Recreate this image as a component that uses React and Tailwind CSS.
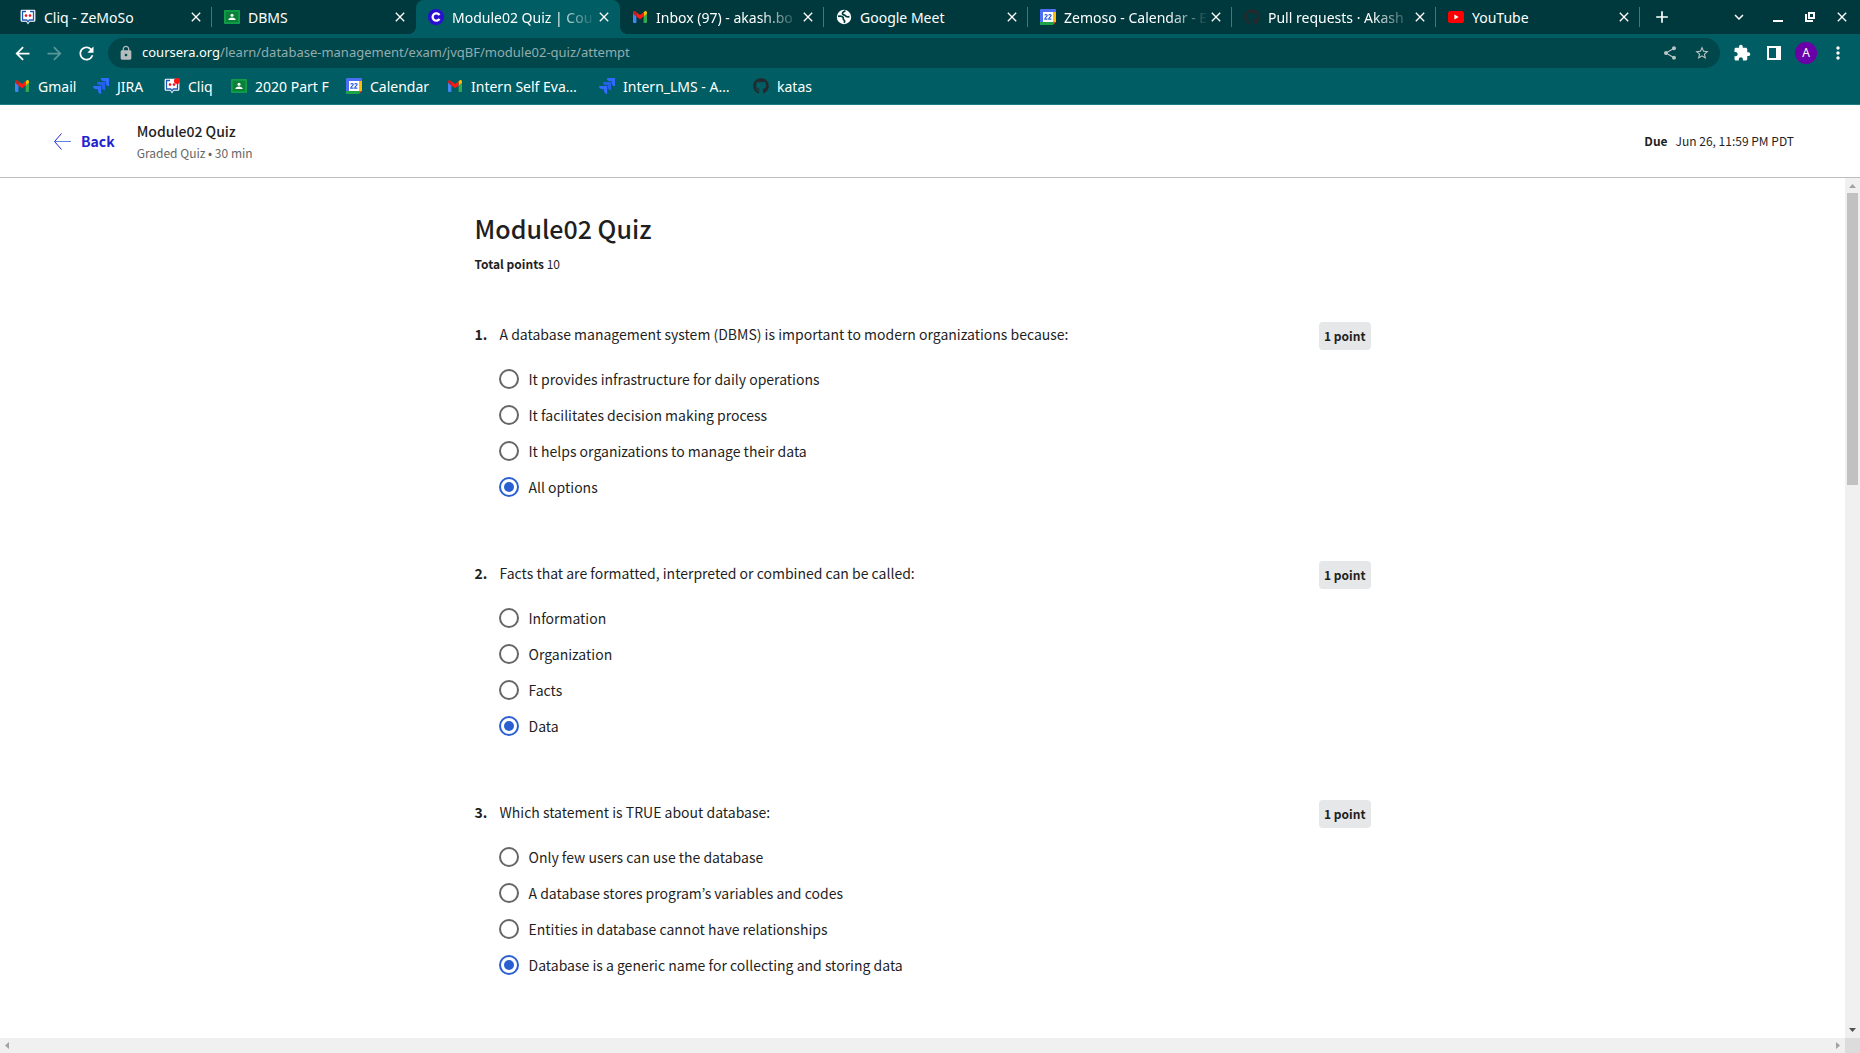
import React from "react";
import { FaGithub } from "react-icons/fa";
import {
  MdArrowBack,
  MdArrowForward,
  MdRefresh,
  MdLock,
  MdShare,
  MdStarOutline,
  MdExtension,
  MdMoreVert,
  MdClose,
  MdAdd,
  MdOutlineKeyboardArrowDown,
} from "react-icons/md";

const CHROME_FONT = "font-['Noto_Sans',sans-serif]";
const PAGE_FONT = "font-['Noto_Sans_CJK_KR',sans-serif]";

function GmailIcon() {
  return (
    <svg viewBox="0 0 16 16" className="size-4 shrink-0" aria-hidden="true">
      <path d="M1 4.2V13a1 1 0 0 0 1 1h2.4V6.8z" fill="#4285f4" />
      <path d="M15 4.2V13a1 1 0 0 1-1 1h-2.4V6.8z" fill="#34a853" />
      <path d="M11.6 3.4v4L15 4.8V3.6C15 2.2 13.5 1.6 12.5 2.4z" fill="#fbbc04" />
      <path d="M1 3.6v1.2l3.4 2.6v-4l-.9-1C2.500 1.600 1 2.200 1 3.600z" fill="#c5221f" />
      <path d="M4.400 3.200 8 6l3.600-2.800v4.200L8 10.200 4.400 7.400z" fill="#ff1a12" />
    </svg>
  );
}

function CliqIcon({ dot }) {
  return (
    <svg viewBox="0 0 16 16" className="size-4 shrink-0" aria-hidden="true">
      <path d="M2 .8h12a1.400 1.400 0 0 1 1.400 1.400v9.200A1.400 1.400 0 0 1 14 12.800H9.800L8 15.500l-1.800-2.700H2A1.400 1.400 0 0 1 .6 11.400V2.200A1.400 1.400 0 0 1 2 .8z" fill="#fff" />
      <path d="M6 2.500H2.500v8.500h4.200L8 12.900 9.300 11h4.200V2.500H10" fill="none" stroke="#1e5bb8" strokeWidth="1.300" />
      <circle cx="6" cy="6.600" r="1.300" fill="#f01420" />
      <circle cx="10" cy="6.600" r="1.300" fill="#f01420" />
      {dot && <circle cx="13" cy="3" r="3" fill="#ff1414" />}
    </svg>
  );
}

function ClassroomIcon() {
  return (
    <svg viewBox="0 0 16 16" className="size-4 shrink-0" aria-hidden="true">
      <path d="M0 1.800A.8.800 0 0 1 .8 1h14.400a.8.800 0 0 1 .8.800v12.400a.8.800 0 0 1-.8.800H.8a.8.800 0 0 1-.8-.8z" fill="#0f9d48" />
      <rect x="1.800" y="2.800" width="12.400" height="10.400" fill="#0a8038" />
      <circle cx="8" cy="6.300" r="1.500" fill="#fff" />
      <path d="M4.300 11c0-1.700 1.800-2.600 3.700-2.600s3.700.9 3.700 2.600z" fill="#fff" />
    </svg>
  );
}

function JiraIcon() {
  return (
    <svg viewBox="0 0 16 16" className="size-4 shrink-0" aria-hidden="true">
      <path d="M7.800 0H16v8.200a3.500 3.500 0 0 1-3.200-3.500V3.300h-1.500A3.500 3.500 0 0 1 7.800 0z" fill="#2f6bff" />
      <path d="M3.900 4h8.200v8.200a3.500 3.500 0 0 1-3.200-3.500V7.300H7.400A3.500 3.500 0 0 1 3.900 4z" fill="#2460e8" />
      <path d="M0 8h8.200v8A3.500 3.500 0 0 1 5 12.700v-1.400H3.500A3.500 3.500 0 0 1 0 8z" fill="#2f6bff" />
    </svg>
  );
}

function CalendarIcon() {
  return (
    <svg viewBox="0 0 16 16" className="size-4 shrink-0" aria-hidden="true">
      <path d="M0 1a1 1 0 0 1 1-1h14a1 1 0 0 1 1 1v11l-4 4H1a1 1 0 0 1-1-1z" fill="#4a6ff5" />
      <path d="M13 3h3v10h-3z" fill="#fbbc04" />
      <path d="M0 13h13v3H1a1 1 0 0 1-1-1z" fill="#1ea446" />
      <path d="M13 13h3l-3 3z" fill="#ea4335" />
      <rect x="3" y="3" width="10" height="10" fill="#fff" />
      <path d="M4.800 6.300c.3-1.100 2.400-1.100 2.400.2 0 1.100-2.400 1.800-2.400 3.600h2.700M8.700 6.300c.3-1.100 2.400-1.100 2.400.2 0 1.100-2.400 1.800-2.400 3.600h2.700" fill="none" stroke="#2f5be0" strokeWidth="1.200" />
    </svg>
  );
}

function CourseraIcon() {
  return (
    <svg viewBox="0 0 16 16" className="size-4 shrink-0" aria-hidden="true">
      <circle cx="8" cy="8" r="8" fill="#2a0fd0" />
      <path d="M11.500 6.100A3.700 3.700 0 1 0 11.500 9.900" fill="none" stroke="#fff" strokeWidth="2.300" />
    </svg>
  );
}

function GlobeIcon() {
  return (
    <svg viewBox="0 0 16 16" className="size-4 shrink-0" aria-hidden="true">
      <circle cx="8" cy="8" r="7.200" fill="#fff" />
      <path d="M9.500 1.800C8 2.500 6.300 3 6.500 4.800c.2 1.400 2 .8 2.800 2 .6 1 1.800 1.200 4.200.9" fill="none" stroke="#003c40" strokeWidth="1.700" />
      <path d="M2 7.300c2-.3 4.300-.2 5 1 .6 1-.2 1.700.8 2.500.9.700 1.200 1.500.4 3" fill="none" stroke="#003c40" strokeWidth="1.700" />
    </svg>
  );
}

function YouTubeIcon() {
  return (
    <svg viewBox="0 0 16 16" className="size-4 shrink-0" aria-hidden="true">
      <rect y="2" width="16" height="12" rx="2.600" fill="#f00" />
      <path d="M6.400 5.600v4.800L10.600 8z" fill="#fff" />
    </svg>
  );
}

const tabs = [
  { title: "Cliq - ZeMoSo", icon: <CliqIcon /> },
  { title: "DBMS", icon: <ClassroomIcon /> },
  { title: "Module02 Quiz | Cou", icon: <CourseraIcon />, active: true, faded: true },
  { title: "Inbox (97) - akash.bo", icon: <GmailIcon />, faded: true },
  { title: "Google Meet", icon: <GlobeIcon /> },
  { title: "Zemoso - Calendar - E", icon: <CalendarIcon />, faded: true },
  { title: "Pull requests · Akash", icon: <FaGithub className="size-4 shrink-0 text-[#24292e]" />, faded: true },
  { title: "YouTube", icon: <YouTubeIcon /> },
];

const bookmarks = [
  { title: "Gmail", icon: <GmailIcon />, width: "min-w-[79px]" },
  { title: "JIRA", icon: <JiraIcon />, width: "min-w-[71px]" },
  { title: "Cliq", icon: <CliqIcon dot />, width: "min-w-[67px]" },
  { title: "2020 Part F", icon: <ClassroomIcon />, width: "min-w-[115px]" },
  { title: "Calendar", icon: <CalendarIcon />, width: "min-w-[101px]" },
  { title: "Intern Self Eva…", icon: <GmailIcon />, width: "min-w-[152px]" },
  { title: "Intern_LMS - A…", icon: <JiraIcon />, width: "min-w-[154px]" },
  { title: "katas", icon: <FaGithub className="size-4 shrink-0 text-[#24292e]" />, width: "min-w-[76px]" },
];

const questions = [
  {
    text: "A database management system (DBMS) is important to modern organizations because:",
    options: [
      "It provides infrastructure for daily operations",
      "It facilitates decision making process",
      "It helps organizations to manage their data",
      "All options",
    ],
  },
  {
    text: "Facts that are formatted, interpreted or combined can be called:",
    options: ["Information", "Organization", "Facts", "Data"],
  },
  {
    text: "Which statement is TRUE about database:",
    options: [
      "Only few users can use the database",
      "A database stores program’s variables and codes",
      "Entities in database cannot have relationships",
      "Database is a generic name for collecting and storing data",
    ],
  },
];

function Tab({ title, icon, active, faded }) {
  return (
    <div
      className={
        active
          ? "relative flex h-full min-w-0 max-w-[204px] flex-1 items-center rounded-t-lg bg-[#005d63] pr-2 pl-3 before:absolute before:bottom-0 before:-left-2 before:size-2 before:bg-[radial-gradient(circle_at_0_0,transparent_8px,#005d63_8px)] after:absolute after:-right-2 after:bottom-0 after:size-2 after:bg-[radial-gradient(circle_at_100%_0,transparent_8px,#005d63_8px)]"
          : "flex h-full min-w-0 max-w-[204px] flex-1 items-center pr-2 pl-3"
      }
    >
      {icon}
      <span
        className={
          faded
            ? "ml-2 min-w-0 flex-1 whitespace-nowrap [mask-image:linear-gradient(to_right,black_calc(100%-40px),transparent)]"
            : "ml-2 min-w-0 flex-1 whitespace-nowrap"
        }
      >
        {title}
      </span>
      <button type="button" aria-label={`Close ${title}`} className="shrink-0">
        <MdClose className="size-4" />
      </button>
    </div>
  );
}

function TabStrip() {
  return (
    <div className="flex h-[34px] items-center bg-[#00393d] pl-2 text-[14px]">
      <div className="flex h-full min-w-0 flex-1 items-center">
        {tabs.map((tab, i) => {
          const divided = !tab.active && !tabs[i + 1]?.active;
          return (
            <React.Fragment key={tab.title}>
              <Tab {...tab} />
              <span className={divided ? "-ml-px h-5 w-px shrink-0 bg-[#3d7a7e]" : "-ml-px h-5 w-px shrink-0"} />
            </React.Fragment>
          );
        })}
        <button type="button" aria-label="New tab" className="ml-3">
          <MdAdd className="size-5" />
        </button>
      </div>
      <div className="flex items-center gap-4 pr-2.5">
        <button type="button" aria-label="Search tabs" className="mr-1.5">
          <MdOutlineKeyboardArrowDown className="size-[18px]" />
        </button>
        <button type="button" aria-label="Minimize">
          <svg viewBox="0 0 16 16" className="size-4"><path d="M3 11h10v2H3z" fill="currentColor" /></svg>
        </button>
        <button type="button" aria-label="Restore">
          <svg viewBox="0 0 16 16" className="size-4" fill="none" stroke="currentColor" strokeWidth="2">
            <path d="M7 4h5v5H7z" />
            <path d="M4 5v7h7" />
          </svg>
        </button>
        <button type="button" aria-label="Close window">
          <MdClose className="size-4" />
        </button>
      </div>
    </div>
  );
}

function ToolButton({ label, className = "", children }) {
  return (
    <button type="button" aria-label={label} className={`flex w-8 items-center justify-center ${className}`}>
      {children}
    </button>
  );
}

function AddressBar() {
  return (
    <div className="flex items-center gap-1.5 px-1.5">
      <div className="flex items-center">
        <ToolButton label="Back"><MdArrowBack className="size-[21px]" /></ToolButton>
        <ToolButton label="Forward" className="text-[#5a9699]"><MdArrowForward className="size-[21px]" /></ToolButton>
        <ToolButton label="Reload"><MdRefresh className="size-[21px]" /></ToolButton>
      </div>
      <div className="flex h-[30px] min-w-0 flex-1 items-center rounded-full bg-[#00474c] pr-0.5 pl-2.5 text-[13px]">
        <MdLock className="size-4 shrink-0 text-[#b5bcbd]" />
        <p className="ml-2 min-w-0 flex-1 truncate text-[#93acae]">
          <span className="text-white">coursera.org</span>/learn/database-management/exam/jvqBF/module02-quiz/attempt
        </p>
        <div className="flex items-center text-[#b9c4c5]">
          <ToolButton label="Share"><MdShare className="size-4" /></ToolButton>
          <ToolButton label="Bookmark"><MdStarOutline className="size-4" /></ToolButton>
        </div>
      </div>
      <div className="flex items-center">
        <ToolButton label="Extensions"><MdExtension className="size-[18px]" /></ToolButton>
        <ToolButton label="Side panel">
          <svg viewBox="0 0 20 20" className="size-5">
            <path d="M3 3h14v14H3zM5 5v10h7V5z" fill="currentColor" fillRule="evenodd" />
          </svg>
        </ToolButton>
        <ToolButton label="Profile">
          <span className="size-[22px] rounded-full bg-[#6a00a8] text-center text-[12px] leading-[22px]">A</span>
        </ToolButton>
        <ToolButton label="Menu"><MdMoreVert className="size-5" /></ToolButton>
      </div>
    </div>
  );
}

function BookmarksBar() {
  return (
    <nav className="flex h-9 items-center px-1.5 text-[14px]">
      {bookmarks.map((b) => (
        <a key={b.title} href="#" className={`flex shrink-0 items-center gap-2 px-2 whitespace-nowrap ${b.width}`}>
          {b.icon}
          {b.title}
        </a>
      ))}
    </nav>
  );
}

function QuizHeader() {
  return (
    <header className="flex items-center border-b border-[#bdbdbd] bg-white px-[54px] py-3.5 text-[#1f1f1f]">
      <a href="#" className="flex items-center gap-2.5 text-[14px] leading-6 font-bold text-[#2222d0]">
        <svg viewBox="0 0 17 17" className="size-[17px]" fill="none" stroke="currentColor" aria-hidden="true">
          <path d="M7.500.5.500 8.500l7 8" />
          <path d="M.5 8.500H17" stroke="#5b84e8" />
        </svg>
        Back
      </a>
      <div className="ml-[22px]">
        <h2 className="text-[14px] leading-6 font-medium">Module02 Quiz</h2>
        <p className="text-[12px] leading-5 text-[#666]">Graded Quiz • 30 min</p>
      </div>
      <p className="ml-auto flex gap-2 pr-3 text-[12px] leading-5">
        <strong>Due</strong>
        <span>Jun 26, 11:59 PM PDT</span>
      </p>
    </header>
  );
}

function Question({ number, text, options }) {
  const name = `question-${number}`;
  return (
    <fieldset className="mb-16">
      <div className="flex items-start text-[14px] leading-6">
        <span className="w-[25px] shrink-0 font-bold">{number}.</span>
        <p className="min-w-0 flex-1">{text}</p>
        <span className="rounded bg-[#e5e7e8] px-[5px] text-[12px] leading-7 font-bold">1 point</span>
      </div>
      <div className="mt-[19px] ml-6 flex flex-col gap-4">
        {options.map((option, i) => (
          <label key={option} className="flex h-5 items-center gap-2.5 text-[14px] leading-5">
            <input
              type="radio"
              name={name}
              defaultChecked={i === 3}
              className="grid size-5 shrink-0 appearance-none place-content-center rounded-full border-2 border-[#666] before:size-2.5 before:rounded-full before:content-[''] checked:border-[#2a5fd2] checked:before:bg-[#2a5fd2]"
            />
            <span>{option}</span>
          </label>
        ))}
      </div>
    </fieldset>
  );
}

function VerticalScrollbar() {
  return (
    <div className="flex w-[15px] shrink-0 flex-col items-center bg-[#f0f0f0]" aria-hidden="true">
      <svg viewBox="0 0 15 15" className="h-[15px] w-[15px]"><path d="M4 10h7L7.500 6z" fill="#a3a3a3" /></svg>
      <div className="h-[34%] w-[11px] bg-[#c1c1c1]" />
      <svg viewBox="0 0 15 15" className="mt-auto h-[15px] w-[15px]"><path d="M4 5h7L7.500 9z" fill="#505050" /></svg>
    </div>
  );
}

function HorizontalScrollbar() {
  return (
    <div className="flex h-[15px] shrink-0 bg-[#f0f0f0]" aria-hidden="true">
      <svg viewBox="0 0 15 15" className="h-[15px] w-[15px]"><path d="M9 4v7L5 7.500z" fill="#a3a3a3" /></svg>
      <svg viewBox="0 0 15 15" className="ml-auto h-[15px] w-[15px]"><path d="M6 4v7l4-3.500z" fill="#a3a3a3" /></svg>
      <div className="w-[15px] bg-[#dcdcdc]" />
    </div>
  );
}

export default function App() {
  return (
    <div className="flex h-screen flex-col overflow-hidden bg-white">
      <div className={`${CHROME_FONT} shrink-0 border-b border-[#1a7f84] bg-[#005d63] text-white`}>
        <TabStrip />
        <div className="pt-1">
          <AddressBar />
          <BookmarksBar />
        </div>
      </div>
      <div className={`${PAGE_FONT} flex min-h-0 flex-1 flex-col text-[#1f1f1f]`}>
        <QuizHeader />
        <div className="flex min-h-0 flex-1">
          <main className="min-w-0 flex-1 overflow-hidden">
            <div className="mx-auto max-w-4xl pt-8">
              <h1 className="text-[25px] leading-9 font-medium">Module02 Quiz</h1>
              <p className="mt-2 mb-12 text-[12px] leading-5">
                <strong>Total points</strong> 10
              </p>
              {questions.map((q, i) => (
                <Question key={q.text} number={i + 1} {...q} />
              ))}
            </div>
          </main>
          <VerticalScrollbar />
        </div>
        <HorizontalScrollbar />
      </div>
    </div>
  );
}
